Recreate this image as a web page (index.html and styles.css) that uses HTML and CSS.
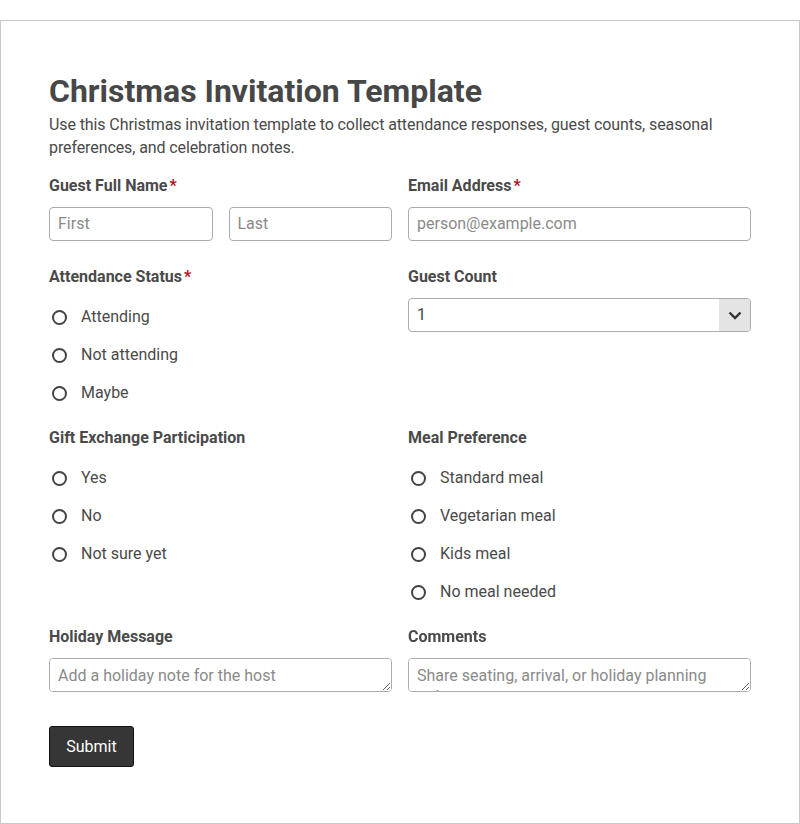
FILE: index.html
```html
<!DOCTYPE html>
<html lang="en">
<head>
  <meta charset="UTF-8">
  <meta name="viewport" content="width=device-width, initial-scale=1.0">
  <title>Christmas Invitation Template</title>
  <link rel="stylesheet" href="styles.css">
</head>
<body>

  <!-- Form Card -->
  <div class="form-card">
    <h1 class="form-title">Christmas Invitation Template</h1>
    <p class="form-desc">Use this Christmas invitation template to collect attendance responses, guest counts, seasonal preferences, and celebration notes.</p>

    <form class="form-grid">
      <div class="field">
        <label class="field-label">Guest Full Name<span class="req">*</span></label>
        <div class="name-row">
          <input type="text" placeholder="First">
          <input type="text" placeholder="Last">
        </div>
      </div>

      <div class="field">
        <label class="field-label">Email Address<span class="req">*</span></label>
        <input type="email" placeholder="person@example.com">
      </div>

      <div class="field">
        <label class="field-label">Attendance Status<span class="req">*</span></label>
        <div class="radio-list">
          <label class="radio"><input type="radio" name="attend"> Attending</label>
          <label class="radio"><input type="radio" name="attend"> Not attending</label>
          <label class="radio"><input type="radio" name="attend"> Maybe</label>
        </div>
      </div>

      <div class="field">
        <label class="field-label">Guest Count</label>
        <div class="select-wrap">
          <select>
            <option>1</option>
            <option>2</option>
            <option>3</option>
            <option>4</option>
          </select>
          <span class="select-arrow">
            <svg width="14" height="9" viewBox="0 0 14 9"><path d="M1.5 1.5 L7 7 L12.5 1.5" fill="none" stroke="#333" stroke-width="2.4"/></svg>
          </span>
        </div>
      </div>

      <div class="field">
        <label class="field-label">Gift Exchange Participation</label>
        <div class="radio-list">
          <label class="radio"><input type="radio" name="gift"> Yes</label>
          <label class="radio"><input type="radio" name="gift"> No</label>
          <label class="radio"><input type="radio" name="gift"> Not sure yet</label>
        </div>
      </div>

      <div class="field">
        <label class="field-label">Meal Preference</label>
        <div class="radio-list">
          <label class="radio"><input type="radio" name="meal"> Standard meal</label>
          <label class="radio"><input type="radio" name="meal"> Vegetarian meal</label>
          <label class="radio"><input type="radio" name="meal"> Kids meal</label>
          <label class="radio"><input type="radio" name="meal"> No meal needed</label>
        </div>
      </div>

      <div class="field">
        <label class="field-label">Holiday Message</label>
        <textarea rows="1" placeholder="Add a holiday note for the host"></textarea>
      </div>

      <div class="field">
        <label class="field-label">Comments</label>
        <textarea rows="1" placeholder="Share seating, arrival, or holiday planning notes"></textarea>
      </div>
    </form>

    <button type="button" class="submit-btn">Submit</button>
  </div>

</body>
</html>
```

FILE: styles.css
```css
* {
  margin: 0;
  padding: 0;
  box-sizing: border-box;
}

body {
  font-family: Roboto, "Liberation Sans", Arial, sans-serif;
  color: #4a4a4a;
  background-color: #fff;
}

.form-card {
  margin-top: 20px;
  border: 1px solid #c8c8c8;
  padding: 50px 48px 56px 48px;
}

.form-title {
  font-size: 32px;
  font-weight: 700;
  line-height: 40px;
  color: #474747;
  margin-bottom: 2px;
}

.form-desc {
  font-size: 16px;
  line-height: 23px;
  letter-spacing: -0.1px;
  margin-bottom: 17px;
}

/* Two column form layout */
.form-grid {
  display: grid;
  grid-template-columns: 1fr 1fr;
  column-gap: 16px;
  row-gap: 26px;
  align-items: start;
}

.field-label {
  display: block;
  font-size: 16px;
  font-weight: 700;
  line-height: 19px;
  margin-bottom: 12px;
}

.req {
  color: #b0121b;
  margin-left: 2px;
}

.name-row {
  display: flex;
  gap: 16px;
}

input[type="text"],
input[type="email"],
textarea,
select {
  display: block;
  width: 100%;
  height: 34px;
  padding: 5px 8px 6px 8px;
  border: 1px solid #ababab;
  border-radius: 4px;
  font-family: inherit;
  font-size: 16px;
  color: #4a4a4a;
  background-color: #fff;
}

::placeholder {
  color: #8a8a8a;
}

textarea {
  line-height: 20px;
  padding-top: 7px;
  resize: vertical;
}

/* Select with custom arrow */
.select-wrap {
  position: relative;
}

select {
  appearance: none;
  -webkit-appearance: none;
  padding-right: 40px;
}

.select-arrow {
  position: absolute;
  top: 1px;
  right: 1px;
  bottom: 1px;
  width: 31px;
  background-color: #e4e4e4;
  border-radius: 0 3px 3px 0;
  display: flex;
  align-items: center;
  justify-content: center;
  pointer-events: none;
}

/* Radio options */
.radio-list {
  display: flex;
  flex-direction: column;
  gap: 16px;
  padding-top: 7px;
  margin-bottom: -1px;
}

.radio {
  display: flex;
  align-items: center;
  height: 22px;
  font-size: 16px;
  gap: 14px;
}

.radio input {
  appearance: none;
  -webkit-appearance: none;
  width: 15px;
  height: 15px;
  margin: 2px 0 0 3px;
  border: 2px solid #444;
  border-radius: 50%;
  flex-shrink: 0;
}

.submit-btn {
  margin-top: 34px;
  width: 85px;
  height: 41px;
  background-color: #363636;
  color: #fff;
  border: 1px solid #111;
  border-radius: 3px;
  font-family: inherit;
  font-size: 16px;
}
```
